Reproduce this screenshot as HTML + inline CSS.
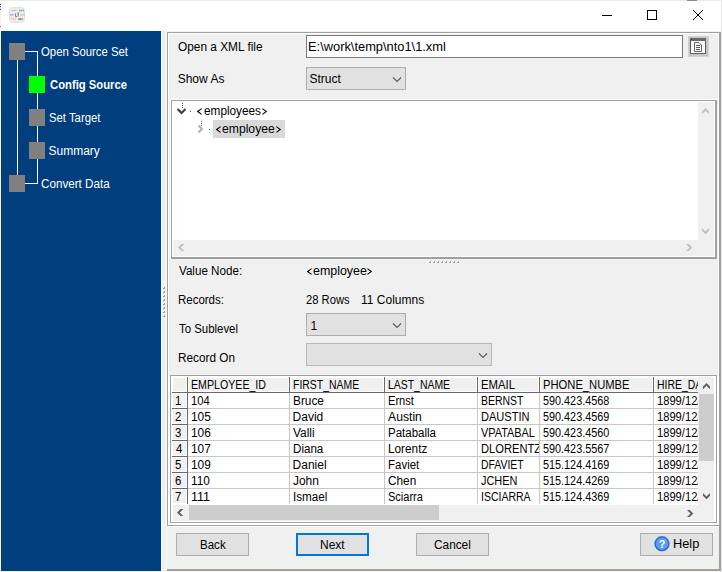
<!DOCTYPE html>
<html><head><meta charset="utf-8"><style>
html,body{margin:0;padding:0;width:722px;height:572px;overflow:hidden;background:#f0f0f0;}
body{position:relative;font-family:"Liberation Sans", sans-serif;}
body div{position:absolute;}
svg{position:absolute;display:block;}
.t{line-height:16px;white-space:pre;transform-origin:0 0;font-family:"Liberation Sans", sans-serif;}
</style></head><body>
<div style='left:0px;top:0px;width:722px;height:1px;background:#ececec;'></div>
<div style='left:1px;top:1px;width:720px;height:30px;background:#ffffff;'></div>
<div style='left:0px;top:571px;width:722px;height:1px;background:#f6f2ea;'></div>
<div style='left:0px;top:1px;width:1px;height:571px;background:#f6f2ea;'></div>
<div style='left:721px;top:1px;width:1px;height:571px;background:#e6e6e6;'></div>
<div style='left:687px;top:0px;width:10px;height:1px;background:#8a8a8a;'></div>
<svg style='left:9px;top:7px;opacity:0.8' width='16' height='16'>
<rect x='0.5' y='0.5' width='15' height='15' rx='3' fill='#e8e8e8' stroke='#dadada'/>
<path d='M2.5 3.5 H7.5' stroke='#58b878' stroke-width='1.2' stroke-dasharray='1.2 0.6'/>
<path d='M10 3.5 H15' stroke='#4a8fd0' stroke-width='1.6' stroke-dasharray='1.5 0.5'/>
<path d='M0.8 7.8 H5' stroke='#9a88e0' stroke-width='1.6' stroke-dasharray='1.5 0.4'/>
<path d='M6.5 6.5 V9.5 H8 M8.5 6 H10 M9.2 6 V9.5' fill='none' stroke='#555' stroke-width='0.9'/>
<path d='M11.5 8 H15.8' stroke='#88c0b0' stroke-width='1.4' stroke-dasharray='1.2 0.6'/>
<path d='M2 12 H7' stroke='#e8944a' stroke-width='1.1' stroke-dasharray='1.4 0.5'/>
<path d='M9.5 12.2 H13.5' stroke='#444' stroke-width='1.8' stroke-dasharray='1.2 0.5'/>
</svg>
<div style='left:602px;top:15px;width:10px;height:1px;background:#000;'></div>
<div style='left:647px;top:10px;width:10px;height:10px;background:transparent;box-sizing:border-box;border:1px solid #000'></div>
<div style='left:693px;top:10px;width:1px;height:1px;background:#000;'></div>
<div style='left:702px;top:10px;width:1px;height:1px;background:#000;'></div>
<div style='left:694px;top:11px;width:1px;height:1px;background:#000;'></div>
<div style='left:701px;top:11px;width:1px;height:1px;background:#000;'></div>
<div style='left:695px;top:12px;width:1px;height:1px;background:#000;'></div>
<div style='left:700px;top:12px;width:1px;height:1px;background:#000;'></div>
<div style='left:696px;top:13px;width:1px;height:1px;background:#000;'></div>
<div style='left:699px;top:13px;width:1px;height:1px;background:#000;'></div>
<div style='left:697px;top:14px;width:1px;height:1px;background:#000;'></div>
<div style='left:698px;top:14px;width:1px;height:1px;background:#000;'></div>
<div style='left:698px;top:15px;width:1px;height:1px;background:#000;'></div>
<div style='left:697px;top:15px;width:1px;height:1px;background:#000;'></div>
<div style='left:699px;top:16px;width:1px;height:1px;background:#000;'></div>
<div style='left:696px;top:16px;width:1px;height:1px;background:#000;'></div>
<div style='left:700px;top:17px;width:1px;height:1px;background:#000;'></div>
<div style='left:695px;top:17px;width:1px;height:1px;background:#000;'></div>
<div style='left:701px;top:18px;width:1px;height:1px;background:#000;'></div>
<div style='left:694px;top:18px;width:1px;height:1px;background:#000;'></div>
<div style='left:702px;top:19px;width:1px;height:1px;background:#000;'></div>
<div style='left:693px;top:19px;width:1px;height:1px;background:#000;'></div>
<div style='left:0px;top:4px;width:1px;height:1px;background:#333;'></div>
<div style='left:0px;top:6px;width:1px;height:1px;background:#555;'></div>
<div style='left:0px;top:7px;width:1px;height:2px;background:#9ee;'></div>
<div style='left:0px;top:9px;width:1px;height:1px;background:#444;'></div>
<div style='left:0px;top:26px;width:1px;height:1px;background:#d07020;'></div>
<div style='left:1px;top:31px;width:160px;height:540px;background:#003e7e;'></div>
<div style='left:17px;top:60px;width:1px;height:115px;background:#fff;'></div>
<div style='left:25px;top:51px;width:12px;height:1px;background:#fff;'></div>
<div style='left:37px;top:51px;width:1px;height:133px;background:#fff;'></div>
<div style='left:25px;top:183px;width:12px;height:1px;background:#fff;'></div>
<div style='left:9px;top:43px;width:16px;height:17px;background:#808080;'></div>
<div style='left:29px;top:76px;width:16px;height:17px;background:#00ff00;'></div>
<div style='left:29px;top:109px;width:16px;height:17px;background:#808080;'></div>
<div style='left:29px;top:142px;width:16px;height:17px;background:#808080;'></div>
<div style='left:9px;top:175px;width:16px;height:17px;background:#808080;'></div>
<div style='left:161px;top:31px;width:560px;height:540px;background:#f0f0f0;'></div>
<div style='left:161px;top:31px;width:1px;height:540px;background:#fafafa;'></div>
<div style='left:166px;top:32px;width:1px;height:494px;background:#fff;'></div>
<div style='left:167px;top:32px;width:552px;height:1px;background:#a0a0a0;'></div>
<div style='left:168px;top:33px;width:550px;height:1px;background:#fff;'></div>
<div style='left:167px;top:32px;width:1px;height:494px;background:#a0a0a0;'></div>
<div style='left:168px;top:33px;width:1px;height:492px;background:#fff;'></div>
<div style='left:718px;top:33px;width:1px;height:493px;background:#fff;'></div>
<div style='left:719px;top:32px;width:2px;height:539px;background:#a0a0a0;'></div>
<div style='left:167px;top:525px;width:552px;height:1px;background:#a0a0a0;'></div>
<div style='left:168px;top:526px;width:551px;height:1px;background:#fff;'></div>
<div style='left:166px;top:526px;width:1px;height:44px;background:#fff;'></div>
<div style='left:167px;top:569px;width:554px;height:2px;background:#a0a0a0;'></div>
<div style='left:306px;top:35px;width:377px;height:23px;background:#fff;box-sizing:border-box;border:1px solid #7a7a7a'></div>
<svg style='left:688px;top:36px' width='21' height='21'>
<rect x='0' y='0' width='21' height='21' fill='#d2d2d2'/>
<rect x='1' y='1' width='19' height='19' fill='#c6c6c6'/>
<rect x='2.5' y='2.5' width='15' height='15' fill='#fdfdfd' stroke='#5e5e5e' stroke-width='1'/>
<rect x='2' y='2' width='16' height='3' fill='#6a6a6a'/>
<rect x='3' y='3' width='1' height='1' fill='#222'/>
<path d='M6.5 6.5 H11 L13.5 9 V15.5 H6.5 Z' fill='#fff' stroke='#666' stroke-width='1'/>
<path d='M8 9.5 H12 M8 11.5 H12 M8 13.5 H12' stroke='#5a5a5a' stroke-width='1'/>
</svg>
<div style='left:306px;top:67px;width:100px;height:23px;background:#e1e1e1;box-sizing:border-box;border:1px solid #adadad'></div>
<svg style='left:392px;top:76px' width='11' height='8'><path d='M1 1.5 L5 5.5 L9 1.5' fill='none' stroke='#5a5a5a' stroke-width='1.1'/></svg>
<div style='left:170px;top:99px;width:547px;height:1px;background:#fff;'></div>
<div style='left:170px;top:99px;width:1px;height:160px;background:#fff;'></div>
<div style='left:171px;top:100px;width:546px;height:1px;background:#a0a0a0;'></div>
<div style='left:171px;top:100px;width:1px;height:159px;background:#a0a0a0;'></div>
<div style='left:172px;top:101px;width:543px;height:156px;background:#fff;'></div>
<div style='left:715px;top:100px;width:2px;height:159px;background:#a0a0a0;'></div>
<div style='left:171px;top:257px;width:546px;height:2px;background:#a0a0a0;'></div>
<div style='left:698px;top:102px;width:16px;height:138px;background:#f0f0f0;'></div>
<div style='left:173px;top:240px;width:525px;height:16px;background:#f0f0f0;'></div>
<div style='left:698px;top:240px;width:16px;height:16px;background:#f0f0f0;'></div>
<svg style='left:702px;top:108px' width='7' height='7'><polygon points='0,3.5 3.5,0 7,3.5 7,6.3 3.5,2.8 0,6.3' fill='#bfbfbf'/></svg>
<svg style='left:702px;top:228px' width='7' height='7'><polygon points='0,0 3.5,3.5 7,0 7,2.8 3.5,6.3 0,2.8' fill='#bfbfbf'/></svg>
<svg style='left:178px;top:244px' width='7' height='7'><polygon points='3.5,0 0,3.5 3.5,7 6.3,7 2.8,3.5 6.3,0' fill='#bfbfbf'/></svg>
<svg style='left:686px;top:244px' width='7' height='7'><polygon points='2.8,0 6.3,3.5 2.8,7 0,7 3.5,3.5 0,0' fill='#bfbfbf'/></svg>
<svg style='left:176px;top:102px' width='12' height='13'><path d='M6.5 1 V6' stroke='#555' stroke-width='1' stroke-dasharray='1 1'/><path d='M1.5 7 L5.5 11 L9.5 7' fill='none' stroke='#3c3c3c' stroke-width='2'/></svg>
<div style='left:190px;top:111px;width:1px;height:1px;background:#555;'></div>
<svg style='left:197px;top:108px' width='6' height='7'><path d='M4.6 0.6 L0.7 3.5 L4.6 6.4' fill='none' stroke='#000' stroke-width='1.05'/></svg>
<svg style='left:262px;top:108px' width='6' height='7'><path d='M0.4 0.6 L4.3 3.5 L0.4 6.4' fill='none' stroke='#000' stroke-width='1.05'/></svg>
<div style='left:213px;top:120px;width:72px;height:18px;background:#d9d9d9;'></div>
<svg style='left:197px;top:120px' width='9' height='15'><path d='M4.5 1 V6' stroke='#555' stroke-width='1' stroke-dasharray='1 1'/><path d='M1.5 5.5 L5 9 L1.5 12.5' fill='none' stroke='#b0b0b0' stroke-width='2'/></svg>
<div style='left:209px;top:129px;width:1px;height:1px;background:#555;'></div>
<svg style='left:216px;top:126px' width='6' height='7'><path d='M4.6 0.6 L0.7 3.5 L4.6 6.4' fill='none' stroke='#000' stroke-width='1.05'/></svg>
<svg style='left:276px;top:126px' width='6' height='7'><path d='M0.4 0.6 L4.3 3.5 L0.4 6.4' fill='none' stroke='#000' stroke-width='1.05'/></svg>
<div style='left:429px;top:261px;width:2px;height:2px;background:#a0a0a0;'></div>
<div style='left:429px;top:261px;width:1px;height:1px;background:#fff;'></div>
<div style='left:163px;top:287px;width:2px;height:2px;background:#a0a0a0;'></div>
<div style='left:163px;top:287px;width:1px;height:1px;background:#fff;'></div>
<div style='left:433px;top:261px;width:2px;height:2px;background:#a0a0a0;'></div>
<div style='left:433px;top:261px;width:1px;height:1px;background:#fff;'></div>
<div style='left:163px;top:291px;width:2px;height:2px;background:#a0a0a0;'></div>
<div style='left:163px;top:291px;width:1px;height:1px;background:#fff;'></div>
<div style='left:437px;top:261px;width:2px;height:2px;background:#a0a0a0;'></div>
<div style='left:437px;top:261px;width:1px;height:1px;background:#fff;'></div>
<div style='left:163px;top:295px;width:2px;height:2px;background:#a0a0a0;'></div>
<div style='left:163px;top:295px;width:1px;height:1px;background:#fff;'></div>
<div style='left:441px;top:261px;width:2px;height:2px;background:#a0a0a0;'></div>
<div style='left:441px;top:261px;width:1px;height:1px;background:#fff;'></div>
<div style='left:163px;top:299px;width:2px;height:2px;background:#a0a0a0;'></div>
<div style='left:163px;top:299px;width:1px;height:1px;background:#fff;'></div>
<div style='left:445px;top:261px;width:2px;height:2px;background:#a0a0a0;'></div>
<div style='left:445px;top:261px;width:1px;height:1px;background:#fff;'></div>
<div style='left:163px;top:303px;width:2px;height:2px;background:#a0a0a0;'></div>
<div style='left:163px;top:303px;width:1px;height:1px;background:#fff;'></div>
<div style='left:449px;top:261px;width:2px;height:2px;background:#a0a0a0;'></div>
<div style='left:449px;top:261px;width:1px;height:1px;background:#fff;'></div>
<div style='left:163px;top:307px;width:2px;height:2px;background:#a0a0a0;'></div>
<div style='left:163px;top:307px;width:1px;height:1px;background:#fff;'></div>
<div style='left:453px;top:261px;width:2px;height:2px;background:#a0a0a0;'></div>
<div style='left:453px;top:261px;width:1px;height:1px;background:#fff;'></div>
<div style='left:163px;top:311px;width:2px;height:2px;background:#a0a0a0;'></div>
<div style='left:163px;top:311px;width:1px;height:1px;background:#fff;'></div>
<div style='left:457px;top:261px;width:2px;height:2px;background:#a0a0a0;'></div>
<div style='left:457px;top:261px;width:1px;height:1px;background:#fff;'></div>
<div style='left:163px;top:315px;width:2px;height:2px;background:#a0a0a0;'></div>
<div style='left:163px;top:315px;width:1px;height:1px;background:#fff;'></div>
<svg style='left:307px;top:268px' width='6' height='7'><path d='M4.6 0.6 L0.7 3.5 L4.6 6.4' fill='none' stroke='#000' stroke-width='1.05'/></svg>
<svg style='left:367px;top:268px' width='6' height='7'><path d='M0.4 0.6 L4.3 3.5 L0.4 6.4' fill='none' stroke='#000' stroke-width='1.05'/></svg>
<div style='left:306px;top:313px;width:100px;height:23px;background:#e1e1e1;box-sizing:border-box;border:1px solid #adadad'></div>
<svg style='left:392px;top:322px' width='11' height='8'><path d='M1 1.5 L5 5.5 L9 1.5' fill='none' stroke='#5a5a5a' stroke-width='1.1'/></svg>
<div style='left:306px;top:343px;width:186px;height:23px;background:#e1e1e1;box-sizing:border-box;border:1px solid #b8b8b8'></div>
<svg style='left:478px;top:352px' width='11' height='8'><path d='M1 1.5 L5 5.5 L9 1.5' fill='none' stroke='#5a5a5a' stroke-width='1.1'/></svg>
<div style='left:168px;top:374px;width:2px;height:149px;background:#fff;'></div>
<div style='left:170px;top:375px;width:547px;height:1px;background:#a0a0a0;'></div>
<div style='left:170px;top:375px;width:1px;height:148px;background:#a0a0a0;'></div>
<div style='left:171px;top:376px;width:545px;height:146px;background:#fff;'></div>
<div style='left:716px;top:375px;width:1px;height:148px;background:#a0a0a0;'></div>
<div style='left:170px;top:522px;width:547px;height:1px;background:#a0a0a0;'></div>
<div style='left:717px;top:375px;width:1px;height:149px;background:#fff;'></div>
<div style='left:170px;top:523px;width:548px;height:2px;background:#fff;'></div>
<div style='left:172px;top:377px;width:15px;height:15px;background:#f0f0f0;box-sizing:border-box;border:1px solid #fff'></div>
<div style='left:188px;top:377px;width:101px;height:15px;background:#f0f0f0;box-sizing:border-box;border:1px solid #fff'></div>
<div style='left:290px;top:377px;width:94px;height:15px;background:#f0f0f0;box-sizing:border-box;border:1px solid #fff'></div>
<div style='left:385px;top:377px;width:92px;height:15px;background:#f0f0f0;box-sizing:border-box;border:1px solid #fff'></div>
<div style='left:478px;top:377px;width:61px;height:15px;background:#f0f0f0;box-sizing:border-box;border:1px solid #fff'></div>
<div style='left:540px;top:377px;width:113px;height:15px;background:#f0f0f0;box-sizing:border-box;border:1px solid #fff'></div>
<div style='left:654px;top:377px;width:44px;height:15px;background:#f0f0f0;box-sizing:border-box;border:1px solid #fff'></div>
<div style='left:172px;top:392px;width:526px;height:1px;background:#696969;'></div>
<div style='left:187px;top:377px;width:1px;height:16px;background:#696969;'></div>
<div style='left:289px;top:377px;width:1px;height:16px;background:#696969;'></div>
<div style='left:384px;top:377px;width:1px;height:16px;background:#696969;'></div>
<div style='left:477px;top:377px;width:1px;height:16px;background:#696969;'></div>
<div style='left:539px;top:377px;width:1px;height:16px;background:#696969;'></div>
<div style='left:653px;top:377px;width:1px;height:16px;background:#696969;'></div>
<div style='left:172px;top:393px;width:15px;height:15px;background:#f0f0f0;box-sizing:border-box;border:1px solid #fff'></div>
<div style='left:172px;top:409px;width:15px;height:15px;background:#f0f0f0;box-sizing:border-box;border:1px solid #fff'></div>
<div style='left:172px;top:425px;width:15px;height:15px;background:#f0f0f0;box-sizing:border-box;border:1px solid #fff'></div>
<div style='left:172px;top:441px;width:15px;height:15px;background:#f0f0f0;box-sizing:border-box;border:1px solid #fff'></div>
<div style='left:172px;top:457px;width:15px;height:15px;background:#f0f0f0;box-sizing:border-box;border:1px solid #fff'></div>
<div style='left:172px;top:473px;width:15px;height:15px;background:#f0f0f0;box-sizing:border-box;border:1px solid #fff'></div>
<div style='left:172px;top:489px;width:15px;height:15px;background:#f0f0f0;box-sizing:border-box;border:1px solid #fff'></div>
<div style='left:187px;top:393px;width:1px;height:111px;background:#696969;'></div>
<div style='left:289px;top:393px;width:1px;height:111px;background:#c8c8c8;'></div>
<div style='left:384px;top:393px;width:1px;height:111px;background:#c8c8c8;'></div>
<div style='left:477px;top:393px;width:1px;height:111px;background:#c8c8c8;'></div>
<div style='left:539px;top:393px;width:1px;height:111px;background:#c8c8c8;'></div>
<div style='left:653px;top:393px;width:1px;height:111px;background:#c8c8c8;'></div>
<div style='left:172px;top:408px;width:15px;height:1px;background:#696969;'></div>
<div style='left:188px;top:408px;width:510px;height:1px;background:#c8c8c8;'></div>
<div style='left:172px;top:424px;width:15px;height:1px;background:#696969;'></div>
<div style='left:188px;top:424px;width:510px;height:1px;background:#c8c8c8;'></div>
<div style='left:172px;top:440px;width:15px;height:1px;background:#696969;'></div>
<div style='left:188px;top:440px;width:510px;height:1px;background:#c8c8c8;'></div>
<div style='left:172px;top:456px;width:15px;height:1px;background:#696969;'></div>
<div style='left:188px;top:456px;width:510px;height:1px;background:#c8c8c8;'></div>
<div style='left:172px;top:472px;width:15px;height:1px;background:#696969;'></div>
<div style='left:188px;top:472px;width:510px;height:1px;background:#c8c8c8;'></div>
<div style='left:172px;top:488px;width:15px;height:1px;background:#696969;'></div>
<div style='left:188px;top:488px;width:510px;height:1px;background:#c8c8c8;'></div>
<div style='left:698px;top:377px;width:16px;height:128px;background:#f0f0f0;'></div>
<div style='left:699px;top:394px;width:15px;height:67px;background:#cdcdcd;'></div>
<svg style='left:703px;top:383px' width='7' height='7'><polygon points='0,3.5 3.5,0 7,3.5 7,6.3 3.5,2.8 0,6.3' fill='#606060'/></svg>
<svg style='left:703px;top:493px' width='7' height='7'><polygon points='0,0 3.5,3.5 7,0 7,2.8 3.5,6.3 0,2.8' fill='#606060'/></svg>
<div style='left:173px;top:505px;width:525px;height:16px;background:#f0f0f0;'></div>
<div style='left:698px;top:505px;width:16px;height:16px;background:#f0f0f0;'></div>
<div style='left:189px;top:505px;width:250px;height:15px;background:#cdcdcd;'></div>
<svg style='left:177px;top:509px' width='7' height='7'><polygon points='3.5,0 0,3.5 3.5,7 6.3,7 2.8,3.5 6.3,0' fill='#606060'/></svg>
<svg style='left:687px;top:510px' width='7' height='7'><polygon points='2.8,0 6.3,3.5 2.8,7 0,7 3.5,3.5 0,0' fill='#606060'/></svg>
<div style='left:176px;top:533px;width:73px;height:23px;background:#e1e1e1;box-sizing:border-box;border:1px solid #adadad'></div>
<div style='left:296px;top:533px;width:73px;height:23px;background:#e1e1e1;box-sizing:border-box;border:2px solid #0078d7'></div>
<div style='left:416px;top:533px;width:73px;height:23px;background:#e1e1e1;box-sizing:border-box;border:1px solid #adadad'></div>
<div style='left:640px;top:533px;width:73px;height:23px;background:#e1e1e1;box-sizing:border-box;border:1px solid #adadad'></div>
<svg style='left:653px;top:535px' width='18' height='18'><circle cx='9' cy='8.7' r='7.4' fill='none' stroke='#5a5a5a' stroke-opacity='0.45' stroke-width='0.8'/><circle cx='9' cy='8.7' r='6.8' fill='#5b9cf2' stroke='#1e66d8' stroke-width='1.2'/><text x='9' y='13' text-anchor='middle' font-family='Liberation Sans' font-size='11' font-weight='bold' fill='#fff'>?</text></svg>
<div class=t style='left:41.05px;top:44px;font-size:12px;font-weight:400;color:#fff;transform:scaleX(0.9451);'>Open Source Set</div>
<div class=t style='left:49.50px;top:77px;font-size:12px;font-weight:700;color:#fff;transform:scaleX(0.9390);'>Config Source</div>
<div class=t style='left:48.56px;top:110px;font-size:12px;font-weight:400;color:#fff;transform:scaleX(0.9444);'>Set Target</div>
<div class=t style='left:48.50px;top:143px;font-size:12px;font-weight:400;color:#fff;transform:scaleX(1.0000);'>Summary</div>
<div class=t style='left:41.03px;top:176px;font-size:12px;font-weight:400;color:#fff;transform:scaleX(0.9714);'>Convert Data</div>
<div class=t style='left:177.71px;top:39px;font-size:12px;font-weight:400;color:#000;transform:scaleX(0.9881);'>Open a XML file</div>
<div class=t style='left:177.70px;top:71px;font-size:12px;font-weight:400;color:#000;transform:scaleX(1.0000);'>Show As</div>
<div class=t style='left:308.43px;top:39px;font-size:12px;font-weight:400;color:#000;transform:scaleX(1.0709);'>E:\work\temp\nto1\1.xml</div>
<div class=t style='left:309.50px;top:71px;font-size:12px;font-weight:400;color:#000;transform:scaleX(1.0000);'>Struct</div>
<div class=t style='left:203.52px;top:103px;font-size:12px;font-weight:400;color:#000;transform:scaleX(0.9825);'>employees</div>
<div class=t style='left:222.49px;top:121px;font-size:12px;font-weight:400;color:#000;transform:scaleX(1.0140);'>employee</div>
<div class=t style='left:178.70px;top:263px;font-size:12px;font-weight:400;color:#000;transform:scaleX(0.9688);'>Value Node:</div>
<div class=t style='left:313.46px;top:263px;font-size:12px;font-weight:400;color:#000;transform:scaleX(1.0360);'>employee</div>
<div class=t style='left:177.74px;top:292px;font-size:12px;font-weight:400;color:#000;transform:scaleX(0.9565);'>Records:</div>
<div class=t style='left:305.57px;top:292px;font-size:12px;font-weight:400;color:#000;transform:scaleX(0.9333);'>28 Rows</div>
<div class=t style='left:361.00px;top:292px;font-size:12px;font-weight:400;color:#000;transform:scaleX(1.0000);'>11 Columns</div>
<div class=t style='left:178.70px;top:321px;font-size:12px;font-weight:400;color:#000;transform:scaleX(0.9508);'>To Sublevel</div>
<div class=t style='left:310.50px;top:318px;font-size:12px;font-weight:400;color:#000;transform:scaleX(1.0000);'>1</div>
<div class=t style='left:177.72px;top:350px;font-size:12px;font-weight:400;color:#000;transform:scaleX(0.9821);'>Record On</div>
<div style='left:188px;top:377px;width:101px;height:15px;overflow:hidden'><div class=t style='left:2.71px;top:0;font-size:12px;font-weight:400;color:#000;transform:scaleX(0.8855);'>EMPLOYEE_ID</div></div>
<div style='left:290px;top:377px;width:94px;height:15px;overflow:hidden'><div class=t style='left:2.73px;top:0;font-size:12px;font-weight:400;color:#000;transform:scaleX(0.8700);'>FIRST_NAME</div></div>
<div style='left:385px;top:377px;width:92px;height:15px;overflow:hidden'><div class=t style='left:2.73px;top:0;font-size:12px;font-weight:400;color:#000;transform:scaleX(0.8700);'>LAST_NAME</div></div>
<div style='left:478px;top:377px;width:61px;height:15px;overflow:hidden'><div class=t style='left:2.66px;top:0;font-size:12px;font-weight:400;color:#000;transform:scaleX(0.9429);'>EMAIL</div></div>
<div style='left:540px;top:377px;width:113px;height:15px;overflow:hidden'><div class=t style='left:2.67px;top:0;font-size:12px;font-weight:400;color:#000;transform:scaleX(0.9341);'>PHONE_NUMBE</div></div>
<div style='left:654px;top:377px;width:44px;height:15px;overflow:hidden'><div class=t style='left:2.73px;top:0;font-size:12px;font-weight:400;color:#000;transform:scaleX(0.8700);'>HIRE_DATE</div></div>
<div class=t style='left:174.55px;top:393px;font-size:12px;font-weight:400;color:#000;transform:scaleX(0.9500);'>1</div>
<div style='left:188px;top:393px;width:101px;height:16px;overflow:hidden'><div class=t style='left:2.66px;top:0;font-size:12px;font-weight:400;color:#000;transform:scaleX(0.9368);'>104</div></div>
<div style='left:290px;top:393px;width:94px;height:16px;overflow:hidden'><div class=t style='left:2.61px;top:0;font-size:12px;font-weight:400;color:#000;transform:scaleX(0.9867);'>Bruce</div></div>
<div style='left:385px;top:393px;width:92px;height:16px;overflow:hidden'><div class=t style='left:2.67px;top:0;font-size:12px;font-weight:400;color:#000;transform:scaleX(0.9259);'>Ernst</div></div>
<div style='left:478px;top:393px;width:61px;height:16px;overflow:hidden'><div class=t style='left:2.73px;top:0;font-size:12px;font-weight:400;color:#000;transform:scaleX(0.8723);'>BERNST</div></div>
<div style='left:540px;top:393px;width:113px;height:16px;overflow:hidden'><div class=t style='left:2.70px;top:0;font-size:12px;font-weight:400;color:#000;transform:scaleX(0.9028);'>590.423.4568</div></div>
<div style='left:654px;top:393px;width:44px;height:16px;overflow:hidden'><div class=t style='left:2.67px;top:0;font-size:12px;font-weight:400;color:#000;transform:scaleX(0.9300);'>1899/12/30</div></div>
<div class=t style='left:174.55px;top:409px;font-size:12px;font-weight:400;color:#000;transform:scaleX(0.9500);'>2</div>
<div style='left:188px;top:409px;width:101px;height:16px;overflow:hidden'><div class=t style='left:2.61px;top:0;font-size:12px;font-weight:400;color:#000;transform:scaleX(0.9889);'>105</div></div>
<div style='left:290px;top:409px;width:94px;height:16px;overflow:hidden'><div class=t style='left:2.60px;top:0;font-size:12px;font-weight:400;color:#000;transform:scaleX(1.0000);'>David</div></div>
<div style='left:384px;top:409px;width:93px;height:16px;overflow:hidden'><div class=t style='left:3.70px;top:0;font-size:12px;font-weight:400;color:#000;transform:scaleX(1.0152);'>Austin</div></div>
<div style='left:478px;top:409px;width:61px;height:16px;overflow:hidden'><div class=t style='left:2.68px;top:0;font-size:12px;font-weight:400;color:#000;transform:scaleX(0.9216);'>DAUSTIN</div></div>
<div style='left:540px;top:409px;width:113px;height:16px;overflow:hidden'><div class=t style='left:2.70px;top:0;font-size:12px;font-weight:400;color:#000;transform:scaleX(0.9028);'>590.423.4569</div></div>
<div style='left:654px;top:409px;width:44px;height:16px;overflow:hidden'><div class=t style='left:2.67px;top:0;font-size:12px;font-weight:400;color:#000;transform:scaleX(0.9300);'>1899/12/30</div></div>
<div class=t style='left:174.55px;top:425px;font-size:12px;font-weight:400;color:#000;transform:scaleX(0.9500);'>3</div>
<div style='left:188px;top:425px;width:101px;height:16px;overflow:hidden'><div class=t style='left:2.61px;top:0;font-size:12px;font-weight:400;color:#000;transform:scaleX(0.9889);'>106</div></div>
<div style='left:289px;top:425px;width:95px;height:16px;overflow:hidden'><div class=t style='left:3.70px;top:0;font-size:12px;font-weight:400;color:#000;transform:scaleX(0.9952);'>Valli</div></div>
<div style='left:385px;top:425px;width:92px;height:16px;overflow:hidden'><div class=t style='left:2.64px;top:0;font-size:12px;font-weight:400;color:#000;transform:scaleX(0.9592);'>Pataballa</div></div>
<div style='left:477px;top:425px;width:62px;height:16px;overflow:hidden'><div class=t style='left:3.70px;top:0;font-size:12px;font-weight:400;color:#000;transform:scaleX(0.9085);'>VPATABAL</div></div>
<div style='left:540px;top:425px;width:113px;height:16px;overflow:hidden'><div class=t style='left:2.70px;top:0;font-size:12px;font-weight:400;color:#000;transform:scaleX(0.9028);'>590.423.4560</div></div>
<div style='left:654px;top:425px;width:44px;height:16px;overflow:hidden'><div class=t style='left:2.67px;top:0;font-size:12px;font-weight:400;color:#000;transform:scaleX(0.9300);'>1899/12/30</div></div>
<div class=t style='left:175.50px;top:441px;font-size:12px;font-weight:400;color:#000;transform:scaleX(0.9500);'>4</div>
<div style='left:188px;top:441px;width:101px;height:16px;overflow:hidden'><div class=t style='left:2.61px;top:0;font-size:12px;font-weight:400;color:#000;transform:scaleX(0.9889);'>107</div></div>
<div style='left:290px;top:441px;width:94px;height:16px;overflow:hidden'><div class=t style='left:2.63px;top:0;font-size:12px;font-weight:400;color:#000;transform:scaleX(0.9667);'>Diana</div></div>
<div style='left:385px;top:441px;width:92px;height:16px;overflow:hidden'><div class=t style='left:2.62px;top:0;font-size:12px;font-weight:400;color:#000;transform:scaleX(0.9821);'>Lorentz</div></div>
<div style='left:478px;top:441px;width:61px;height:16px;overflow:hidden'><div class=t style='left:2.67px;top:0;font-size:12px;font-weight:400;color:#000;transform:scaleX(0.9300);'>DLORENTZ</div></div>
<div style='left:540px;top:441px;width:113px;height:16px;overflow:hidden'><div class=t style='left:2.70px;top:0;font-size:12px;font-weight:400;color:#000;transform:scaleX(0.9028);'>590.423.5567</div></div>
<div style='left:654px;top:441px;width:44px;height:16px;overflow:hidden'><div class=t style='left:2.67px;top:0;font-size:12px;font-weight:400;color:#000;transform:scaleX(0.9300);'>1899/12/30</div></div>
<div class=t style='left:174.55px;top:457px;font-size:12px;font-weight:400;color:#000;transform:scaleX(0.9500);'>5</div>
<div style='left:188px;top:457px;width:101px;height:16px;overflow:hidden'><div class=t style='left:2.61px;top:0;font-size:12px;font-weight:400;color:#000;transform:scaleX(0.9889);'>109</div></div>
<div style='left:290px;top:457px;width:94px;height:16px;overflow:hidden'><div class=t style='left:2.60px;top:0;font-size:12px;font-weight:400;color:#000;transform:scaleX(1.0000);'>Daniel</div></div>
<div style='left:385px;top:457px;width:92px;height:16px;overflow:hidden'><div class=t style='left:2.64px;top:0;font-size:12px;font-weight:400;color:#000;transform:scaleX(0.9563);'>Faviet</div></div>
<div style='left:478px;top:457px;width:61px;height:16px;overflow:hidden'><div class=t style='left:2.73px;top:0;font-size:12px;font-weight:400;color:#000;transform:scaleX(0.8667);'>DFAVIET</div></div>
<div style='left:540px;top:457px;width:113px;height:16px;overflow:hidden'><div class=t style='left:2.70px;top:0;font-size:12px;font-weight:400;color:#000;transform:scaleX(0.9028);'>515.124.4169</div></div>
<div style='left:654px;top:457px;width:44px;height:16px;overflow:hidden'><div class=t style='left:2.67px;top:0;font-size:12px;font-weight:400;color:#000;transform:scaleX(0.9300);'>1899/12/30</div></div>
<div class=t style='left:174.55px;top:473px;font-size:12px;font-weight:400;color:#000;transform:scaleX(0.9500);'>6</div>
<div style='left:188px;top:473px;width:101px;height:16px;overflow:hidden'><div class=t style='left:2.61px;top:0;font-size:12px;font-weight:400;color:#000;transform:scaleX(0.9889);'>110</div></div>
<div style='left:289px;top:473px;width:95px;height:16px;overflow:hidden'><div class=t style='left:3.70px;top:0;font-size:12px;font-weight:400;color:#000;transform:scaleX(0.9960);'>John</div></div>
<div style='left:385px;top:473px;width:92px;height:16px;overflow:hidden'><div class=t style='left:2.61px;top:0;font-size:12px;font-weight:400;color:#000;transform:scaleX(0.9852);'>Chen</div></div>
<div style='left:477px;top:473px;width:62px;height:16px;overflow:hidden'><div class=t style='left:3.70px;top:0;font-size:12px;font-weight:400;color:#000;transform:scaleX(0.9103);'>JCHEN</div></div>
<div style='left:540px;top:473px;width:113px;height:16px;overflow:hidden'><div class=t style='left:2.70px;top:0;font-size:12px;font-weight:400;color:#000;transform:scaleX(0.9028);'>515.124.4269</div></div>
<div style='left:654px;top:473px;width:44px;height:16px;overflow:hidden'><div class=t style='left:2.67px;top:0;font-size:12px;font-weight:400;color:#000;transform:scaleX(0.9300);'>1899/12/30</div></div>
<div class=t style='left:174.55px;top:489px;font-size:12px;font-weight:400;color:#000;transform:scaleX(0.9500);'>7</div>
<div style='left:188px;top:489px;width:101px;height:16px;overflow:hidden'><div class=t style='left:2.55px;top:0;font-size:12px;font-weight:400;color:#000;transform:scaleX(1.0471);'>111</div></div>
<div style='left:290px;top:489px;width:94px;height:16px;overflow:hidden'><div class=t style='left:2.63px;top:0;font-size:12px;font-weight:400;color:#000;transform:scaleX(0.9706);'>Ismael</div></div>
<div style='left:385px;top:489px;width:92px;height:16px;overflow:hidden'><div class=t style='left:2.68px;top:0;font-size:12px;font-weight:400;color:#000;transform:scaleX(0.9189);'>Sciarra</div></div>
<div style='left:478px;top:489px;width:61px;height:16px;overflow:hidden'><div class=t style='left:2.73px;top:0;font-size:12px;font-weight:400;color:#000;transform:scaleX(0.8750);'>ISCIARRA</div></div>
<div style='left:540px;top:489px;width:113px;height:16px;overflow:hidden'><div class=t style='left:2.70px;top:0;font-size:12px;font-weight:400;color:#000;transform:scaleX(0.9028);'>515.124.4369</div></div>
<div style='left:654px;top:489px;width:44px;height:16px;overflow:hidden'><div class=t style='left:2.67px;top:0;font-size:12px;font-weight:400;color:#000;transform:scaleX(0.9300);'>1899/12/30</div></div>
<div class=t style='left:199.54px;top:537px;font-size:12px;font-weight:400;color:#000;transform:scaleX(0.9615);'>Back</div>
<div class=t style='left:320.00px;top:537px;font-size:12px;font-weight:400;color:#000;transform:scaleX(1.0000);'>Next</div>
<div class=t style='left:433.51px;top:537px;font-size:12px;font-weight:400;color:#000;transform:scaleX(0.9861);'>Cancel</div>
<div class=t style='left:673.43px;top:536px;font-size:12px;font-weight:400;color:#000;transform:scaleX(1.0652);'>Help</div>
</body></html>
